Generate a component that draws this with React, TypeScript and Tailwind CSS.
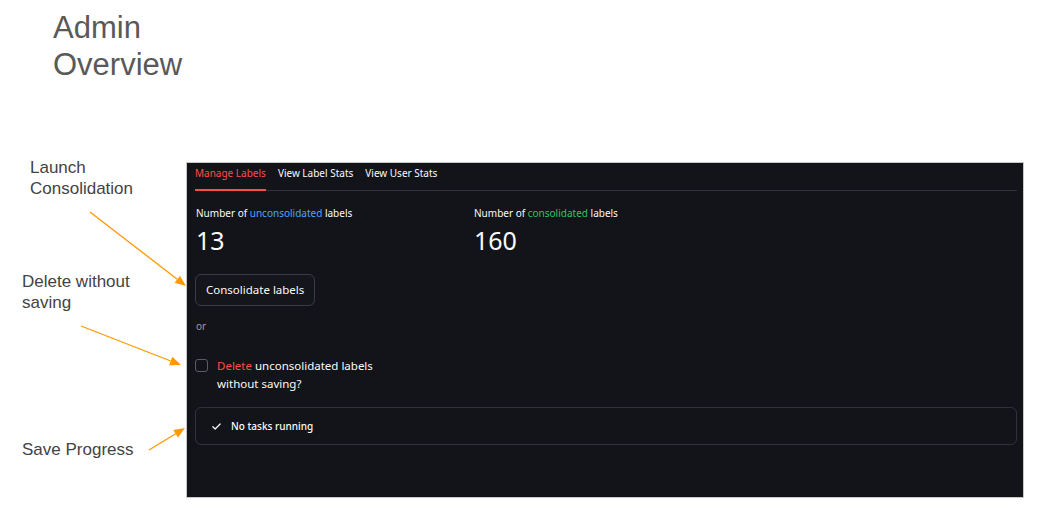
import React from 'react';

const sans = { fontFamily: '"Noto Sans", "Open Sans", sans-serif' };

const Arrow: React.FC<{ x1: number; y1: number; x2: number; y2: number }> = ({ x1, y1, x2, y2 }) => {
  const a = Math.atan2(y2 - y1, x2 - x1);
  const len = 11;
  const w = 4.5;
  const bx = x2 - len * Math.cos(a);
  const by = y2 - len * Math.sin(a);
  const px = -Math.sin(a) * w;
  const py = Math.cos(a) * w;
  return (
    <g>
      <line x1={x1} y1={y1} x2={bx} y2={by} stroke="#ff9900" strokeWidth={1.3} />
      <polygon points={`${x2},${y2} ${bx + px},${by + py} ${bx - px},${by - py}`} fill="#ff9900" />
    </g>
  );
};

const App: React.FC = () => {
  return (
    <div className="relative w-[1042px] h-[518px] overflow-hidden bg-white font-['Liberation_Sans',Arial,sans-serif]">
      {/* Slide title */}
      <h1 className="pl-[53px] pt-[9px] text-[31px] leading-[37px] text-[#595959] font-normal">
        Admin
        <br />
        Overview
      </h1>

      {/* Annotations */}
      <div className="absolute left-[30px] top-[157px] text-[17px] leading-[21px] text-[#434343]">
        Launch
        <br />
        Consolidation
      </div>
      <div className="absolute left-[22px] top-[271px] text-[17px] leading-[21px] text-[#434343]">
        Delete without
        <br />
        saving
      </div>
      <div className="absolute left-[22px] top-[439px] text-[17px] leading-[21px] text-[#434343]">
        Save Progress
      </div>
      <svg className="absolute left-0 top-0 pointer-events-none z-10" width={1042} height={518}>
        <Arrow x1={90} y1={212} x2={186} y2={286} />
        <Arrow x1={81} y1={326} x2={181} y2={365} />
        <Arrow x1={149} y1={450} x2={185} y2={428} />
      </svg>

      {/* Streamlit panel */}
      <div
        className="absolute left-[186px] top-[162px] w-[838px] h-[336px] bg-[#131419] border border-[#c8c8c8] pl-[8px] pr-[6px] text-[#fafafa]"
        style={sans}
      >
        <div className="flex gap-[12px] border-b border-[#31333b] text-[10px] h-[28px] items-end">
          <div className="pb-[8px] text-[#ff4b4b] border-b-2 border-[#ff4b4b] -mb-px">Manage Labels</div>
          <div className="pb-[8px] -mb-px border-b-2 border-transparent">View Label Stats</div>
          <div className="pb-[8px] -mb-px border-b-2 border-transparent">View User Stats</div>
        </div>

        <div className="flex mt-[15px] pl-px">
          <div className="w-[278px]">
            <div className="text-[10px] leading-[14px]">
              Number of <span className="text-[#4aa3ff]">unconsolidated</span> labels
            </div>
            <div className="text-[25px] leading-[34px] mt-[3px]">13</div>
          </div>
          <div>
            <div className="text-[10px] leading-[14px]">
              Number of <span className="text-[#2ec55e]">consolidated</span> labels
            </div>
            <div className="text-[25px] leading-[34px] mt-[3px]">160</div>
          </div>
        </div>

        <button
          type="button"
          className="mt-[17px] h-[32px] px-[10px] rounded-[6px] border border-[#3a3c45] bg-[#15161c] text-[11.5px] text-[#fafafa]"
        >
          Consolidate labels
        </button>

        <div className="mt-[13px] pl-px text-[10px] text-[#9c9c9c]">or</div>

        <div className="mt-[23px] flex items-start gap-[9px]">
          <div className="mt-[2px] w-[13px] h-[13px] rounded-[3px] border border-[#5a5d68] bg-[#131419]" />
          <div className="text-[11.5px] leading-[18px]">
            <span className="text-[#ff4b4b]">Delete</span> unconsolidated labels
            <br />
            without saving?
          </div>
        </div>

        <div className="mt-[14px] h-[38px] rounded-[6px] border border-[#30323b] flex items-center gap-[9px] pl-[15px]">
          <svg width="11" height="11" viewBox="0 0 24 24" fill="none" stroke="#fafafa" strokeWidth="2.6" strokeLinecap="round" strokeLinejoin="round">
            <path d="M4 12.5l5 5L20 6.5" />
          </svg>
          <span className="text-[10px] font-medium">No tasks running</span>
        </div>
      </div>
    </div>
  );
};

export default App;
